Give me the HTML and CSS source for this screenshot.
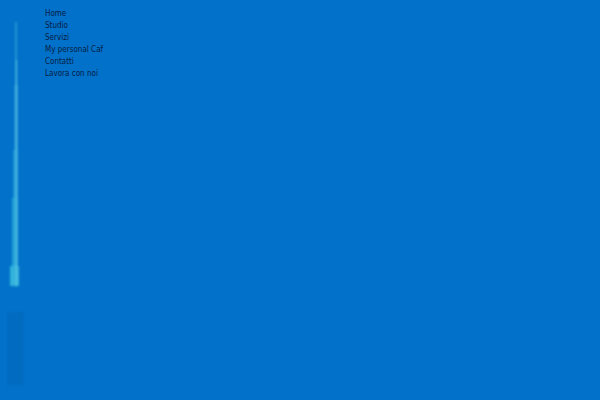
FILE: index.html
```html
<!DOCTYPE html>
<html>
<head>
<meta charset="utf-8">
<link rel="stylesheet" href="styles.css">
</head>
<body>
<div class="page">
  <div class="decor">
    <svg width="45" height="400" viewBox="0 0 45 400">
      <defs>
        <filter id="soft" x="-50%" y="-5%" width="200%" height="110%">
          <feGaussianBlur stdDeviation="0.8"/>
        </filter>
      </defs>
      <g filter="url(#soft)">
        <rect x="15" y="22" width="2" height="265" fill="#2ea0d8" opacity="0.7"/>
        <rect x="14" y="85" width="4" height="65" fill="#1f96d6" opacity="0.8"/>
        <rect x="13" y="150" width="5" height="48" fill="#25a0d8" opacity="0.85"/>
        <rect x="12" y="198" width="6" height="68" fill="#2aa8da" opacity="0.9"/>
        <rect x="10" y="266" width="9" height="20" fill="#33b2dc"/>
        <rect x="16" y="60" width="1" height="225" fill="#5cc8e6"/>
        <g fill="#0b5fb0" opacity="0.55">
          <rect x="8" y="312" width="2" height="73"/>
          <rect x="11" y="312" width="1" height="73"/>
          <rect x="13" y="312" width="2" height="73"/>
          <rect x="16" y="312" width="1" height="73"/>
          <rect x="18" y="312" width="2" height="73"/>
          <rect x="21" y="312" width="2" height="73"/>
        </g>
      </g>
    </svg>
  </div>
  <nav class="menu">
    <a class="item" href="#">Home</a>
    <a class="item" href="#">Studio</a>
    <a class="item" href="#">Servizi</a>
    <a class="item" href="#">My personal Caf</a>
    <a class="item" href="#">Contatti</a>
    <a class="item" href="#">Lavora con noi</a>
  </nav>
</div>
</body>
</html>
```
FILE: styles.css
```css
html, body {
  margin: 0;
  padding: 0;
  background: #0171c9;
  width: 600px;
  height: 400px;
  overflow: hidden;
}
.page {
  display: flex;
  flex-direction: row;
  height: 400px;
}
.decor {
  width: 45px;
  flex: none;
}
.decor svg {
  display: block;
}
.menu {
  padding-top: 8px;
  display: flex;
  flex-direction: column;
}
.item {
  font-family: "DejaVu Sans Condensed", "DejaVu Sans", sans-serif;
  font-stretch: condensed;
  font-weight: normal;
  font-size: 8px;
  line-height: 12px;
  color: #061c44;
  text-decoration: none;
  white-space: nowrap;
}
```
